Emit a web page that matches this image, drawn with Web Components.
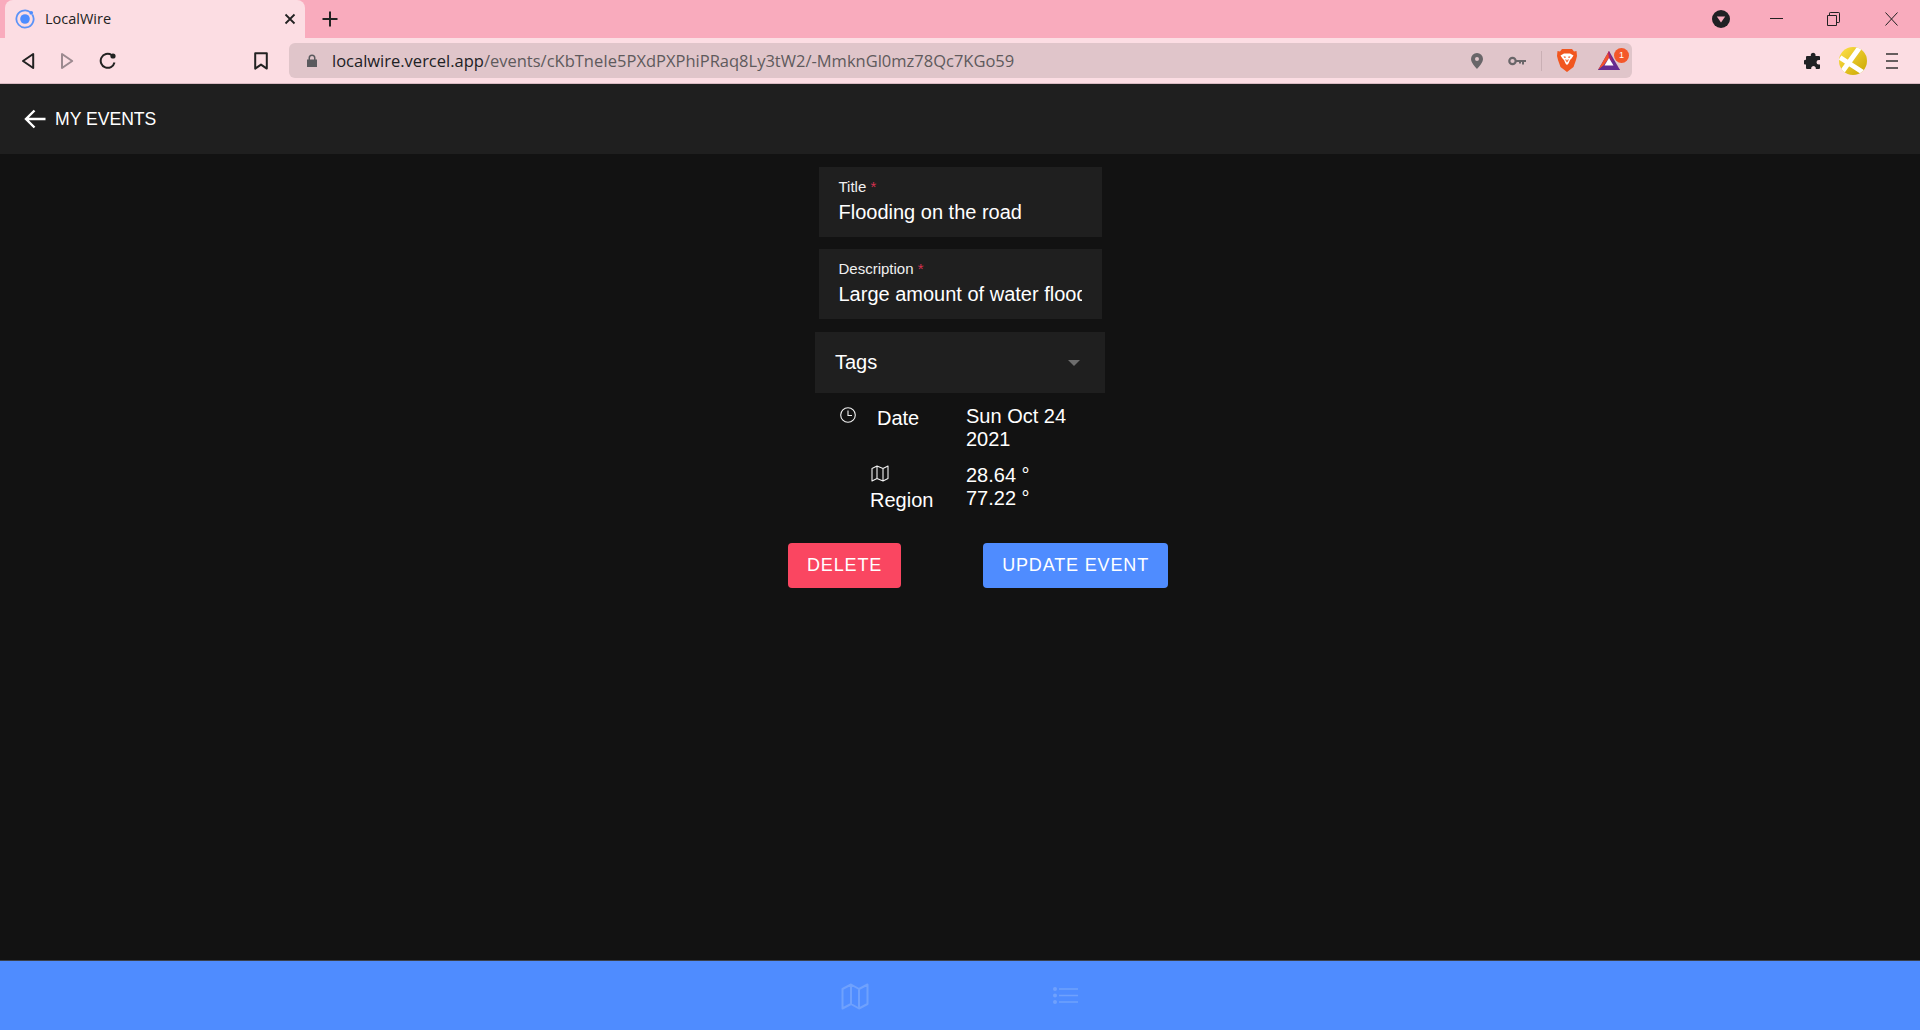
<!DOCTYPE html>
<html>
<head>
<meta charset="utf-8">
<title>LocalWire</title>
<style>
	html, body { margin: 0; height: 100%; }
	body {
		display: flex;
		flex-direction: column;
		height: 1030px;
		overflow: hidden;
		background: #121212;
		font-family: "Liberation Sans", Arial, sans-serif;
		color: #fff;
	}
	main {
		flex: 1;
		display: flex;
		flex-direction: column;
		align-items: center;
		padding-top: 13px;
	}
</style>
</head>
<body>
<browser-tabs title-text="LocalWire"></browser-tabs>
<browser-toolbar></browser-toolbar>
<app-header>MY EVENTS</app-header>
<main>
	<event-field label="Title" value="Flooding on the road"></event-field>
	<event-field label="Description" value="Large amount of water flooding the road"></event-field>
	<tag-select>Tags</tag-select>
	<event-info kind="date" label="Date">Sun Oct 24<br>2021</event-info>
	<event-info kind="region" label="Region">28.64 °<br>77.22 °</event-info>
	<event-actions></event-actions>
</main>
<bottom-tabs></bottom-tabs>

<script>
class BrowserTabs extends HTMLElement {
	constructor() {
		super();
		this.attachShadow({mode: 'open'}).innerHTML = `
			<style>
				:host { display: flex; height: 38px; background: #f9abbd; flex: none; }
				.tab {
					margin-left: 5px;
					width: 300px;
					height: 38px;
					background: #fcdde3;
					border-radius: 8px 8px 0 0;
					display: flex;
					align-items: center;
					box-sizing: border-box;
					padding-left: 10px;
					color: #222;
					font: 14.500px "Open Sans", sans-serif;
				}
				.title { flex: 1; margin-left: 10px; position: relative; top: -1px; }
				.x { margin-right: 9px; display: block; }
				.plus { margin-left: 18px; align-self: center; display: block; position: relative; left: -1px; }
				.right { margin-left: auto; display: flex; align-items: center; }
				.right svg { display: block; }
			</style>
			<div class="tab">
				<svg width="20" height="20" viewBox="0 0 20 20" fill="none">
					<path d="M15.200 3.100A8.600 8.600 0 1 0 17.300 5.400" stroke="#5b93f8" stroke-width="1.800"/>
					<circle cx="10" cy="10" r="4.800" fill="#4d8dff"/>
					<circle cx="16.200" cy="3.800" r="1.900" fill="#4d8dff"/>
				</svg>
				<span class="title">${this.getAttribute('title-text')}</span>
				<svg class="x" width="12" height="12" viewBox="0 0 12 12"><path d="M1.500 1.500l9 9M10.500 1.500l-9 9" stroke="#222" stroke-width="1.800"/></svg>
			</div>
			<svg class="plus" width="16" height="16" viewBox="0 0 16 16"><path d="M8 .5v15M.5 8h15" stroke="#222" stroke-width="2"/></svg>
			<div class="right">
				<svg width="18" height="18" viewBox="0 0 18 18" style="margin-right:40px"><circle cx="9" cy="9" r="9" fill="#202124"/><path d="M4.800 6.600h8.400L9 12.400z" fill="#f9abbd"/></svg>
				<svg width="13" height="14" viewBox="0 0 13 14" style="margin-right:44px"><path d="M0 6.500h13" stroke="#222"/></svg>
				<svg width="13" height="14" viewBox="0 0 13 14" style="margin-right:45px" fill="none" stroke="#222"><path d="M.5 3.500h9v10h-9zM2.500 3.500V1.200c0-.4.2-.7.7-.7h8.600c.4 0 .7.300.7.700v8.600c0 .4-.3.700-.7.700H9.500"/></svg>
				<svg width="13" height="14" viewBox="0 0 13 14" style="margin-right:22px"><path d="M.5.500l12 13M12.500.5l-12 13" stroke="#222"/></svg>
			</div>
		`;
	}
}
customElements.define('browser-tabs', BrowserTabs);

class BrowserToolbar extends HTMLElement {
	constructor() {
		super();
		this.attachShadow({mode: 'open'}).innerHTML = `
			<style>
				:host {
					display: flex;
					align-items: center;
					flex: none;
					height: 46px;
					box-sizing: border-box;
					background: #fcdde3;
					border-bottom: 1px solid #d8b9c1;
				}
				svg { display: block; flex: none; }
				.omni {
					width: 1343px;
					margin-left: 21px;
					height: 35px;
					background: #e0c5ca;
					border-radius: 6px;
					display: flex;
					align-items: center;
					box-sizing: border-box;
					padding-left: 17px;
					position: relative;
				}
				.url { margin-left: 14px; font: 16.500px "Open Sans", sans-serif; color: #5e5a5c; white-space: nowrap; }
				.url b { font-weight: 400; color: #202124; }
				.end { margin-left: auto; display: flex; align-items: center; padding-right: 9px; }
				.badge {
					position: absolute;
					right: 3px;
					top: 5px;
					width: 15px;
					height: 15px;
					border-radius: 50%;
					background: #f4572a;
					color: #fff;
					font: 9px/15px "Liberation Sans", sans-serif;
					text-align: center;
				}
				.sep { width: 1px; height: 20px; background: #c9afb4; margin: 0 15px; }
			</style>
			<svg style="margin-left:21px" width="14" height="18" viewBox="0 0 14 18" fill="none"><path d="M12.200 2v14L2 9z" stroke="#222" stroke-width="2" stroke-linejoin="round"/></svg>
			<svg style="margin-left:25px" width="14" height="18" viewBox="0 0 14 18" fill="none"><path d="M2 2v14l10.200-7z" stroke="#9c8a90" stroke-width="2" stroke-linejoin="round"/></svg>
			<svg style="margin-left:25px" width="18" height="18" viewBox="0 0 18 18" fill="none"><path d="M15.500 10.500A7 7 0 1 1 12.600 3" stroke="#222" stroke-width="2"/><circle cx="14" cy="4" r="2.600" fill="#222"/></svg>
			<svg style="margin-left:137px" width="14" height="18" viewBox="0 0 14 18" fill="none"><path d="M1.200 1.200h11.600v15.400L7 12.600l-5.800 4z" stroke="#222" stroke-width="2" stroke-linejoin="round"/></svg>
			<div class="omni">
				<svg width="12" height="14" viewBox="0 0 12 14"><path d="M1 5.500h1.500V4a3.500 3.500 0 0 1 7 0v1.500H11V13H1zM4 5.500h4V4a2 2 0 0 0-4 0z" fill="#5a5a5e"/></svg>
				<span class="url"><b>localwire.vercel.app</b>/events/cKbTneIe5PXdPXPhiPRaq8Ly3tW2/-MmknGl0mz78Qc7KGo59</span>
				<div class="end">
					<svg width="12" height="16" viewBox="0 0 12 16" style="margin-right:25px"><path fill-rule="evenodd" d="M6 0a6 6 0 0 1 6 6c0 3.500-4 7.500-6 10C4 13.500 0 9.500 0 6a6 6 0 0 1 6-6zm0 4a2 2 0 1 0 0 4 2 2 0 0 0 0-4z" fill="#696669"/></svg>
					<svg width="18" height="10" viewBox="0 0 18 10" fill="none"><circle cx="4.500" cy="5" r="3.200" stroke="#696669" stroke-width="2.200"/><path d="M8 4h10v2h-2v2.500h-2V6h-1v1.500h-2V6H8z" fill="#696669"/></svg>
					<span class="sep"></span>
					<svg width="20" height="23" viewBox="0 0 20 23" style="margin-right:21px"><path d="M5 0h10l2 2.500 2.500-.5.500 5-1 4-2.500 7L10 23l-6.500-5L1 11 0 7l.5-5L3 2.500z" fill="#f1561f"/><path d="M3.500 6.500L7 4.500h6l3.500 2-2 3L13 11l-1.500 3.500L10 16l-1.500-1.500L7 11 5.500 9.500z" fill="#fff"/><path d="M8 10.500h1.300L10 12l.7-1.500H12L10 13.500zM6.500 7.500h2l.3 1.200h-1.500zM13.500 7.500h-2l-.3 1.200h1.500z" fill="#f1561f"/></svg>
					<svg width="22" height="19" viewBox="0 0 22 19" style="margin-right:3px"><path d="M11 0l11 19H0z" fill="#662d91"/><path d="M11 0L0 19l5.500-4.500L11 7z" fill="#f4512c"/><path d="M11 0l-1 1.700 1 5.300 4 4z" fill="#a6246d"/><path d="M0 19l5.500-4.500h11L22 19z" fill="#662d91"/><path d="M11 7l4.500 7.500h-9z" fill="#fff"/></svg>
				</div>
				<span class="badge">1</span>
			</div>
			<svg style="margin-left:172px" width="18" height="18" viewBox="0 0 18 18"><path d="M6.800 2.600a2.400 2.400 0 0 1 4.700 0V4H15a1 1 0 0 1 1 1v3h-1.200a2.300 2.300 0 0 0 0 4.600H18l-2 0V16a1 1 0 0 1-1 1h-3.200v-1.200a2.400 2.400 0 0 0-4.600 0V17H3a1 1 0 0 1-1-1v-3.400H1.800a2.400 2.400 0 0 1 0-4.800H2V5a1 1 0 0 1 1-1h3.800z" fill="#202124"/></svg>
			<svg style="margin-left:17px" width="28" height="28" viewBox="0 0 28 28"><defs><linearGradient id="g" x1="0" y1="0" x2="1" y2="1"><stop offset="0" stop-color="#ffe24a"/><stop offset="1" stop-color="#c9a500"/></linearGradient><clipPath id="c"><circle cx="14" cy="14" r="14"/></clipPath></defs><circle cx="14" cy="14" r="14" fill="url(#g)"/><g clip-path="url(#c)"><path d="M1 10.500L25 26M21 0L3 25" stroke="#fff" stroke-width="5"/></g></svg>
			<svg style="margin-left:19px" width="12" height="16" viewBox="0 0 12 16"><path d="M0 1h12M0 8h12M0 15h12" stroke="#333" stroke-width="1.700"/></svg>
		`;
	}
}
customElements.define('browser-toolbar', BrowserToolbar);

class AppHeader extends HTMLElement {
	constructor() {
		super();
		this.attachShadow({mode: 'open'}).innerHTML = `
			<style>
				:host {
					display: flex;
					align-items: center;
					flex: none;
					height: 70px;
					background: #1f1f1f;
					padding-left: 24px;
					font: 17.600px "Liberation Sans", sans-serif;
					color: #fff;
				}
				svg { display: block; margin-right: 9px; }
			</style>
			<svg width="22" height="20" viewBox="0 0 22 20" fill="none"><path d="M21.500 10H2M10.500 1.500L2 10l8.500 8.500" stroke="#fff" stroke-width="2.400"/></svg>
			<slot></slot>
		`;
	}
}
customElements.define('app-header', AppHeader);

class EventField extends HTMLElement {
	constructor() {
		super();
		this.attachShadow({mode: 'open'}).innerHTML = `
			<style>
				:host {
					display: block;
					width: 283px;
					height: 70px;
					margin-bottom: 12px;
					background: #1f1f1f;
					box-sizing: border-box;
					padding: 11px 20px 0;
				}
				label { display: block; font-size: 15px; line-height: 17px; color: #f0f0f0; }
				i { font-style: normal; font-size: 15px; line-height: 15px; color: #d4314f; }
				input {
					display: block;
					width: 100%;
					box-sizing: border-box;
					margin: 5px 0 0;
					padding: 0;
					border: 0;
					outline: 0;
					background: transparent;
					color: #fff;
					font: 20px/24px "Liberation Sans", sans-serif;
				}
			</style>
			<label>${this.getAttribute('label')} <i>*</i></label>
			<input value="${this.getAttribute('value')}">
		`;
	}
}
customElements.define('event-field', EventField);

class TagSelect extends HTMLElement {
	constructor() {
		super();
		this.attachShadow({mode: 'open'}).innerHTML = `
			<style>
				:host {
					display: flex;
					align-items: center;
					width: 290px;
					height: 61px;
					margin-top: 1px;
					box-sizing: border-box;
					padding: 0 25px 0 20px;
					background: #1f1f1f;
					font-size: 20px;
					color: #fff;
				}
				.caret { margin-left: auto; width: 0; height: 0; border: 6px solid transparent; border-top-color: #6d6d6d; border-bottom: 0; }
			</style>
			<slot></slot>
			<span class="caret"></span>
		`;
	}
}
customElements.define('tag-select', TagSelect);

const INFO_ICONS = {
	date: `<svg width="16" height="16" viewBox="0 0 16 16" fill="none" stroke="#f2f2f2" stroke-width="1.100"><circle cx="8" cy="8" r="7.300"/><path d="M8 3.500V8.500H12"/></svg>`,
	region: `<svg width="18" height="17" viewBox="0 0 18 17" fill="none" stroke="#f2f2f2" stroke-width="1.100" stroke-linejoin="round"><path d="M1 3.500L6 1l6 2.500L17 1v12.500L12 16l-6-2.500L1 16zM6 1v12.500M12 3.500V16"/></svg>`
};

class EventInfo extends HTMLElement {
	constructor() {
		super();
		const kind = this.getAttribute('kind');
		this.attachShadow({mode: 'open'}).innerHTML = `
			<style>
				:host {
					display: grid;
					grid-template-columns: 151px 1fr;
					width: 290px;
					font-size: 20px;
					color: #fff;
				}
				.head.date { display: flex; padding: 14px 0 0 25px; }
				.head.date .lbl { margin-left: 21px; line-height: 23px; }
				.head.region { padding: 15px 0 0 55px; }
				.head.region svg { margin-left: 1px; }
				.head.region .lbl { margin-top: 7px; line-height: 23px; }
				svg { display: block; flex: none; }
				.val { line-height: 22.500px; padding-top: 12px; }
				.head.region + .val { padding-top: 14px; }
			</style>
			<div class="head ${kind}">${INFO_ICONS[kind]}<div class="lbl">${this.getAttribute('label')}</div></div>
			<div class="val"><slot></slot></div>
		`;
	}
}
customElements.define('event-info', EventInfo);

class EventActions extends HTMLElement {
	constructor() {
		super();
		this.attachShadow({mode: 'open'}).innerHTML = `
			<style>
				:host { display: flex; align-self: flex-start; margin: 31px 0 0 788px; }
				button {
					height: 45px;
					border: 0;
					border-radius: 4px;
					padding: 0 19px;
					color: #fff;
					font: 18px "Liberation Sans", sans-serif;
					letter-spacing: .85px;
					text-transform: uppercase;
				}
				.del { background: #fa4661; margin-right: 82px; }
				.upd { background: #4f8cff; }
			</style>
			<button class="del">Delete</button>
			<button class="upd">Update event</button>
		`;
	}
}
customElements.define('event-actions', EventActions);

class BottomTabs extends HTMLElement {
	constructor() {
		super();
		this.attachShadow({mode: 'open'}).innerHTML = `
			<style>
				:host {
					display: flex;
					flex: none;
					height: 70px;
					box-sizing: border-box;
					background: #4f8cff;
					border-top: 1px solid #3a3f4a;
					padding: 22px 0 0 841px;
				}
				svg { display: block; }
			</style>
			<svg width="28" height="27" viewBox="0 0 28 27" fill="none" stroke="#6fa1fd" stroke-width="2" stroke-linejoin="round"><path d="M1.500 6L10 1.500l8 4.500 8.500-4.500V21L18 25.500 10 21l-8.500 4.500zM10 1.500V21M18 6v19.500"/></svg>
			<svg style="margin:4px 0 0 184px" width="25" height="18" viewBox="0 0 25 18"><g fill="#6fa1fd"><circle cx="2" cy="2" r="2"/><circle cx="2" cy="8.500" r="2"/><circle cx="2" cy="15" r="2"/></g><path d="M6 2h19M6 8.500h19M6 15h19" stroke="#6fa1fd" stroke-width="1.600"/></svg>
		`;
	}
}
customElements.define('bottom-tabs', BottomTabs);
</script>
</body>
</html>
